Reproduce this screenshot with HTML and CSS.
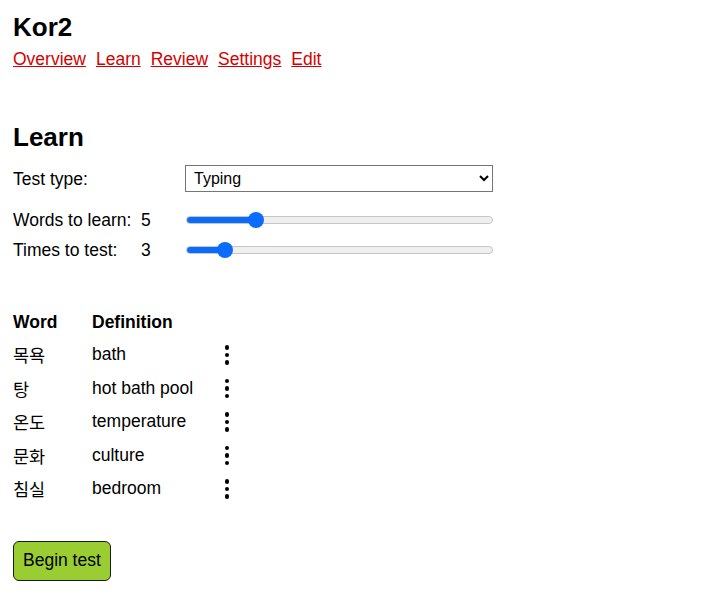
FILE: index.html
```html
<!DOCTYPE html>
<html lang="en">
<head>
<meta charset="utf-8">
<title>Kor2</title>
<link rel="stylesheet" href="styles.css">
</head>
<body>
<div class="page">
  <h1 class="title">Kor2</h1>
  <nav class="nav">
    <a href="#">Overview</a>
    <a href="#">Learn</a>
    <a href="#">Review</a>
    <a href="#">Settings</a>
    <a href="#">Edit</a>
  </nav>

  <h2 class="section-title">Learn</h2>
  <div class="opt-row select-row">
    <label class="opt-label" for="type">Test type:</label>
    <select id="type" class="opt-select">
      <option>Typing</option>
      <option>Multiple choice</option>
    </select>
  </div>
  <div class="sliders">
    <label class="opt-label" for="words">Words to learn:</label>
    <span class="opt-value">5</span>
    <input id="words" class="opt-range" type="range" min="1" max="20" value="5" style="--fill: 69px">

    <label class="opt-label" for="times">Times to test:</label>
    <span class="opt-value">3</span>
    <input id="times" class="opt-range" type="range" min="1" max="20" value="3" style="--fill: 39px">
  </div>

  <table class="words">
    <thead>
      <tr><th>Word</th><th>Definition</th><th></th></tr>
    </thead>
    <tbody>
      <tr><td>목욕</td><td>bath</td><td><span class="kebab"><i></i><i></i><i></i></span></td></tr>
      <tr><td>탕</td><td>hot bath pool</td><td><span class="kebab"><i></i><i></i><i></i></span></td></tr>
      <tr><td>온도</td><td>temperature</td><td><span class="kebab"><i></i><i></i><i></i></span></td></tr>
      <tr><td>문화</td><td>culture</td><td><span class="kebab"><i></i><i></i><i></i></span></td></tr>
      <tr><td>침실</td><td>bedroom</td><td><span class="kebab"><i></i><i></i><i></i></span></td></tr>
    </tbody>
  </table>

  <button class="begin" type="button">Begin test</button>
</div>
</body>
</html>
```

FILE: styles.css
```css
html, body {
  margin: 0;
  padding: 0;
  background: #fff;
}

body {
  font-family: "Liberation Sans", Arial, "Noto Sans CJK KR", sans-serif;
  font-size: 17.5px;
  color: #000;
}

.page {
  padding: 13px 13px 20px 13px;
}

.title {
  font-size: 26px;
  font-weight: bold;
  margin: 0;
  line-height: 29px;
}

.nav {
  display: flex;
  gap: 10px;
  margin-top: 7px;
  line-height: 20px;
}

.nav a {
  color: #d40000;
  text-decoration: underline;
}

.section-title {
  font-size: 26px;
  font-weight: bold;
  margin: 54px 0 0 0;
  line-height: 29px;
}

.select-row {
  display: grid;
  grid-template-columns: 172px 308px;
  align-items: center;
  height: 27px;
  margin-top: 13px;
}

.sliders {
  display: grid;
  grid-template-columns: 128px 45px 307px;
  grid-auto-rows: 30px;
  align-items: center;
  margin-top: 13px;
}

.opt-label,
.opt-value {
  line-height: 20px;
}

.opt-select {
  font: inherit;
  font-size: 16px;
  height: 27px;
  width: 308px;
  margin: 0;
  padding: 0 4px;
  border: 1px solid #767676;
  border-radius: 0;
  background: #fff;
  color: #000;
}

.opt-range {
  -webkit-appearance: none;
  appearance: none;
  width: 307px;
  height: 16px;
  margin: 0;
  background: transparent;
}

.opt-range::-webkit-slider-runnable-track {
  height: 8px;
  box-sizing: border-box;
  border: 1px solid #c6c6c6;
  border-radius: 4px;
  background: linear-gradient(#0b6bfb, #0b6bfb) 0 0 / var(--fill) 100% no-repeat, #efefef;
}

.opt-range::-webkit-slider-thumb {
  -webkit-appearance: none;
  appearance: none;
  width: 16px;
  height: 16px;
  margin-top: -5px;
  border: none;
  border-radius: 50%;
  background: #0b6bfb;
}

.words {
  border-collapse: collapse;
  margin-top: 41px;
}

.words th,
.words td {
  padding: 0;
  text-align: left;
  height: 33.5px;
  vertical-align: middle;
}

.words th {
  font-weight: bold;
  height: 32px;
}

.words th:nth-child(1),
.words td:nth-child(1) {
  width: 79px;
}

.words th:nth-child(2),
.words td:nth-child(2) {
  width: 131px;
}

.kebab {
  display: flex;
  flex-direction: column;
  gap: 3px;
  width: 8px;
  align-items: center;
}

.kebab i {
  display: block;
  width: 4.5px;
  height: 4.5px;
  border-radius: 50%;
  background: #000;
}

.begin {
  display: block;
  margin-top: 35px;
  font: inherit;
  font-size: 17.5px;
  height: 40px;
  padding: 0 9px;
  background: #9acd32;
  border: 1px solid #1a1a1a;
  border-radius: 6px;
  color: #000;
}
```
